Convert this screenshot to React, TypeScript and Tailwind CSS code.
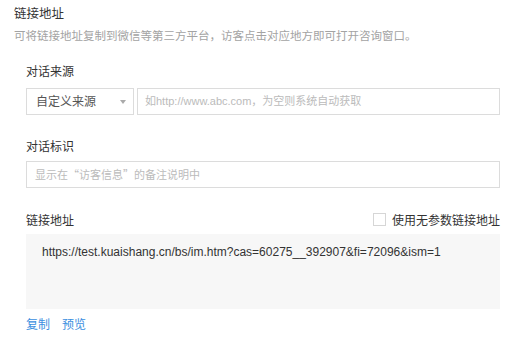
const font = { fontFamily: '"Liberation Sans", "Noto Sans CJK SC", sans-serif' };
const cjk = { fontFamily: '"Noto Sans CJK SC", sans-serif' };

export default function App() {
  return (
    <div className="h-[337px] w-[513px] bg-white text-[#333]" style={font}>
      <div className="px-[14px] pt-[5px]">
        <div className="text-[12.5px] leading-[18px]">链接地址</div>
        <div className="mt-[5px] text-[11.5px] leading-[16px] text-[#a3a3a3]">
          可将链接地址复制到微信等第三方平台，访客点击对应地方即可打开咨询窗口。
        </div>
      </div>

      <div className="pl-[26px] pr-[13px]">
        {/* 对话来源 */}
        <div className="mt-[20px] text-[12px] leading-[16px]">对话来源</div>
        <div className="mt-[8px] flex h-[27px] gap-[3px]">
          <div className="flex w-[108px] items-center justify-between border border-[#dcdcdc] pl-[9px] pr-[6px] text-[12px] text-[#555]">
            <span>自定义来源</span>
            <svg width="6" height="4" viewBox="0 0 6 4" className="mr-[1px]">
              <path d="M0 0h6L3 4z" fill="#aaa" />
            </svg>
          </div>
          <div className="flex flex-1 items-center border border-[#dcdcdc] px-[7px] text-[11px] text-[#bbb]">
            如http://www.abc.com，为空则系统自动获取
          </div>
        </div>

        {/* 对话标识 */}
        <div className="mt-[24px] text-[12px] leading-[16px]">对话标识</div>
        <div className="mt-[6px] flex h-[27px] items-center border border-[#dcdcdc] px-[8px] text-[11px] text-[#bbb]" style={cjk}>
          显示在“访客信息”的备注说明中
        </div>

        {/* 链接地址 */}
        <div className="mt-[25px] flex items-center justify-between">
          <span className="text-[12px] leading-[16px]">链接地址</span>
          <label className="flex items-center gap-[6px] text-[12px] leading-[16px] text-[#333]">
            <span className="-mt-[3px] h-[13px] w-[13px] border border-[#d6d6d6] bg-white" />
            使用无参数链接地址
          </label>
        </div>
        <div className="mt-[5px] h-[75px] bg-[#f7f7f7] px-[16px] pt-[9px] text-[12px] leading-[18px] text-[#333]">
          https://test.kuaishang.cn/bs/im.htm?cas=60275__392907&amp;fi=72096&amp;ism=1
        </div>

        <div className="mt-[8px] flex gap-[12px] text-[12px] leading-[16px] text-[#3b8fe0]">
          <span>复制</span>
          <span>预览</span>
        </div>
      </div>
    </div>
  );
}
